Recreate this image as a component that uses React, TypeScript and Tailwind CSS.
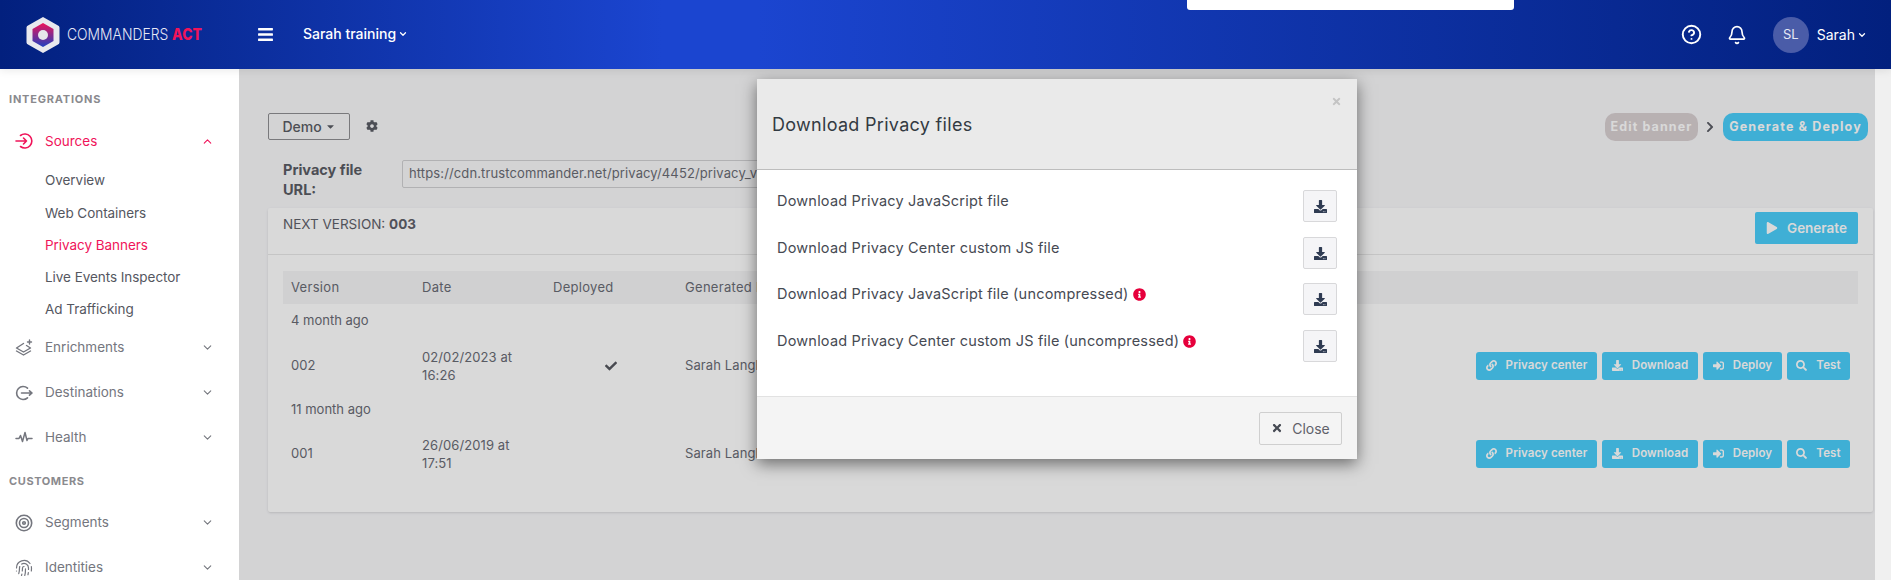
import React from "react";
import { ChevronDown, ChevronUp, CircleHelp, Bell, Fingerprint } from "lucide-react";
import { FaCog, FaCheck, FaDownload, FaLink, FaSearch, FaSignInAlt, FaPlay, FaTimes, FaInfoCircle, FaCaretDown, FaChevronRight, FaBars } from "react-icons/fa";

const font = { fontFamily: "Inter, 'Noto Sans', sans-serif" };

function Logo() {
  return (
    <svg width="36" height="38" viewBox="0 0 36 38">
      <defs>
        <linearGradient id="lg" x1="0" y1="0" x2="0" y2="1">
          <stop offset="0" stopColor="#ee1459" />
          <stop offset="1" stopColor="#1f3fc0" />
        </linearGradient>
      </defs>
      <path d="M18 1 33 9.500a2.500 2.500 0 0 1 1.500 2v15a2.500 2.500 0 0 1-1.500 2L18 37 3 28.500a2.500 2.500 0 0 1-1.500-2v-15a2.500 2.500 0 0 1 1.500-2Z" fill="#e9e9ee" />
      <path d="M18 7 28.500 13v12L18 31 7.500 25V13Z" fill="url(#lg)" />
      <circle cx="18" cy="19" r="5" fill="#e6e6ea" />
    </svg>
  );
}

const stroke = { fill: "none", stroke: "currentColor", strokeLinecap: "round" as const, strokeLinejoin: "round" as const };

function SourcesIcon() {
  return (
    <svg width="18" height="18" viewBox="0 0 18 18" {...stroke} strokeWidth="1.6">
      <path d="M5.500 3.500A7 7 0 1 1 5.500 14.500" />
      <path d="M1 9H11.500M8.500 6l3 3-3 3" />
    </svg>
  );
}

function EnrichIcon() {
  return (
    <svg width="18" height="18" viewBox="0 0 18 18" {...stroke} strokeWidth="1.4">
      <path d="M8.500 4.500 1.500 9l7 4 7-4-4-2.500" />
      <path d="M1.500 12l7 4 7-4" />
      <path d="M14.500 1v4M12.500 3h4" />
    </svg>
  );
}

function DestIcon() {
  return (
    <svg width="18" height="18" viewBox="0 0 18 18" {...stroke} strokeWidth="1.6">
      <path d="M12.500 4.200A6.500 6.500 0 1 0 12.500 13.800" />
      <path d="M6.500 9H17M14.500 6.800 17 9l-2.500 2.200" />
    </svg>
  );
}

function HealthIcon() {
  return (
    <svg width="18" height="18" viewBox="0 0 18 18" {...stroke} strokeWidth="1.5">
      <path d="M1 9.500h3l1.500-3 2 6 2.500-9 2 8 1-2h4" />
    </svg>
  );
}

function TargetIcon() {
  return (
    <svg width="18" height="18" viewBox="0 0 18 18" {...stroke} strokeWidth="1.6">
      <circle cx="9" cy="9" r="7.700" />
      <circle cx="9" cy="9" r="4.500" />
      <circle cx="9" cy="9" r="1.300" />
    </svg>
  );
}

function NavItem({ icon, label, active, open, h }: { icon: React.ReactNode; label: string; active?: boolean; open?: boolean; h: string }) {
  return (
    <div className={`flex items-center pl-[15px] pr-[25px] ${h} ${active ? "text-[#f0145a]" : "text-[#74767e]"}`}>
      <span className="w-[30px] flex items-center">{icon}</span>
      <span className="flex-1 text-[13.500px]">{label}</span>
      {open ? <ChevronUp size={13} strokeWidth={2} /> : <ChevronDown size={13} strokeWidth={2} />}
    </div>
  );
}

function SubItem({ label, active, h }: { label: string; active?: boolean; h: string }) {
  return <div className={`pl-[45px] flex items-center text-[13.500px] tracking-[-0.05px] ${h} ${active ? "text-[#f0145a]" : "text-[#55575f]"}`}>{label}</div>;
}

function Sidebar() {
  return (
    <aside className="w-[239px] shrink-0 bg-white pt-[21px]">
      <div className="pl-[9px] h-[18px] flex items-center text-[11px] font-bold tracking-[0.8px] text-[#8a8a8e]">INTEGRATIONS</div>
      <div className="mt-[14px]">
        <NavItem h="h-[38px]" active open label="Sources" icon={<SourcesIcon />} />
        <div className="pt-[4px]">
          <SubItem h="h-[33px]" label="Overview" />
          <SubItem h="h-[32px]" label="Web Containers" />
          <SubItem h="h-[32px]" active label="Privacy Banners" />
          <SubItem h="h-[33px]" label="Live Events Inspector" />
          <SubItem h="h-[31px]" label="Ad Trafficking" />
        </div>
        <NavItem h="h-[45px]" label="Enrichments" icon={<EnrichIcon />} />
        <NavItem h="h-[45px]" label="Destinations" icon={<DestIcon />} />
        <NavItem h="h-[45px]" label="Health" icon={<HealthIcon />} />
      </div>
      <div className="pl-[9px] h-[18px] mt-[12px] flex items-center text-[11px] font-bold tracking-[0.6px] text-[#8a8a8e]">CUSTOMERS</div>
      <div className="mt-[10px]">
        <NavItem h="h-[45px]" label="Segments" icon={<TargetIcon />} />
        <NavItem h="h-[45px]" label="Identities" icon={<Fingerprint size={18} strokeWidth={1.6} />} />
      </div>
    </aside>
  );
}

function ActionButton({ icon, label, w }: { icon: React.ReactNode; label: string; w: string }) {
  return (
    <button className={`${w} h-[28px] rounded-[3px] bg-[#4bcefb] text-white text-[11.500px] font-semibold flex items-center justify-center gap-[9px]`}>
      {icon}
      <span>{label}</span>
    </button>
  );
}

function Actions() {
  return (
    <div className="flex gap-[5px]">
      <ActionButton w="w-[121px]" label="Privacy center" icon={<FaLink size={11} />} />
      <ActionButton w="w-[96px]" label="Download" icon={<FaDownload size={11} />} />
      <ActionButton w="w-[79px]" label="Deploy" icon={<FaSignInAlt size={11} />} />
      <ActionButton w="w-[63px]" label="Test" icon={<FaSearch size={11} />} />
    </div>
  );
}

function Row({ v, date, time, check }: { v: string; date: string; time: string; check?: boolean }) {
  return (
    <div className="flex items-center h-[55px] pl-[8px] pr-[8px] text-[13px] tracking-[0.1px] text-[#696b75]">
      <span className="w-[131px]">{v}</span>
      <span className="w-[131px] leading-[18px]">{date}<br />{time}</span>
      <span className="w-[132px] pl-[52px]">{check && <FaCheck size={12} className="text-[#55575f]" />}</span>
      <span className="flex-1">Sarah Langlois</span>
      <Actions />
    </div>
  );
}

function MainArea() {
  return (
    <main className="flex-1 bg-[#f8f8fa] pl-[29px] pr-[2px] pt-[44px] relative">
      <div className="flex items-start">
        <button className="w-[82px] h-[27px] border border-[#8f8f92] rounded-[2px] flex items-center justify-center gap-[3px] text-[14px] font-medium text-[#5a5c64]">
          Demo <FaCaretDown size={11} />
        </button>
        <FaCog size={12} className="ml-[16px] mt-[7px] text-[#5a5c64]" />
        <div className="ml-auto mr-[5px] flex items-center">
          <span className="w-[93px] h-[28px] rounded-[10px] bg-[#d9d0d2] text-white text-[12.500px] font-bold tracking-[1.1px] flex items-center justify-center">Edit banner</span>
          <FaChevronRight size={12} className="ml-[6px] mr-[7px] text-[#5a5c64]" />
          <span className="w-[145px] h-[28px] rounded-[10px] bg-[#4bcefb] text-white text-[12.500px] font-bold tracking-[1.15px] flex items-center justify-center whitespace-nowrap">Generate &amp; Deploy</span>
        </div>
      </div>
      <div className="flex pl-[15px] pt-[19px] h-[67px]">
        <div className="w-[119px] text-[14.500px] leading-[20px] font-bold text-[#5a5c64]">Privacy file<br />URL:</div>
        <div className="w-[800px] h-[28px] border border-[#d0d0d3] rounded-[2px] bg-[#f8f8fa] pl-[6px] text-[13px] tracking-[0.12px] text-[#6a6c74] flex items-center">https://cdn.trustcommander.net/privacy/4452/privacy_v2_4452.js</div>
      </div>
      <section className="bg-white rounded-[2px] h-[304px] shadow-sm">
        <div className="h-[47px] border-b border-[#e8e8e8] flex justify-between pl-[15px] pr-[15px]">
          <div className="pt-[6px] text-[13.500px] text-[#5f616a]">NEXT VERSION: <b className="font-bold">003</b></div>
          <button className="mt-[4px] w-[103px] h-[32px] rounded-[2px] bg-[#4bcefb] text-white text-[13.500px] font-semibold flex items-center justify-center gap-[9px]">
            <FaPlay size={12} /> Generate
          </button>
        </div>
        <div className="px-[15px] pt-[16px]">
          <div className="flex items-center h-[33px] pl-[8px] bg-[#f5f5f6] text-[13px] tracking-[0.3px] text-[#696b75]">
            <span className="w-[131px]">Version</span>
            <span className="w-[131px]">Date</span>
            <span className="w-[132px]">Deployed</span>
            <span>Generated by</span>
          </div>
          <div className="h-[34px] flex items-center pl-[8px] text-[13px] text-[#696b75]">4 month ago</div>
          <Row v="002" date="02/02/2023 at" time="16:26" check />
          <div className="h-[33px] flex items-center pl-[8px] text-[13px] text-[#696b75]">11 month ago</div>
          <Row v="001" date="26/06/2019 at" time="17:51" />
        </div>
      </section>
      <div className="absolute inset-0 bg-black/15" />
    </main>
  );
}

function FileRow({ label, info, mt }: { label: string; info?: boolean; mt: string }) {
  return (
    <div className={`flex justify-between items-start ${mt}`}>
      <div className="flex items-center gap-[4px] h-[22px] text-[14.500px] tracking-[0.2px] text-[#464a53]">
        {label}
        {info && <FaInfoCircle size={13} className="text-[#e6003c]" />}
      </div>
      <button className="w-[34px] h-[32px] rounded-[2px] border border-[#d8d8da] bg-[#f5f5f7] flex items-center justify-center text-[#2f3b52]">
        <FaDownload size={13} />
      </button>
    </div>
  );
}

function Modal() {
  return (
    <div className="absolute left-[518px] top-[10px] w-[600px] h-[380px] bg-white shadow-[0_5px_15px_rgba(0,0,0,0.5)] flex flex-col">
      <div className="h-[91px] shrink-0 relative bg-[#eaeaea] border-b border-[#bdbdbd] flex items-center pl-[15px] text-[18px] tracking-[0.3px] text-[#333a42]">
        Download Privacy files
        <FaTimes size={11} className="absolute right-[15px] top-[17px] text-[#c4c4c4]" />
      </div>
      <div className="flex-1 pl-[20px] pr-[20px] pt-[20px]">
        <FileRow label="Download Privacy JavaScript file" mt="" />
        <FileRow label="Download Privacy Center custom JS file" mt="mt-[15px]" />
        <FileRow label="Download Privacy JavaScript file (uncompressed)" info mt="mt-[14px]" />
        <FileRow label="Download Privacy Center custom JS file (uncompressed)" info mt="mt-[15px]" />
      </div>
      <div className="h-[63px] shrink-0 bg-[#f4f4f4] border-t border-[#e2e2e2] flex items-center justify-end pr-[15px]">
        <button className="w-[83px] h-[33px] rounded-[2px] border border-[#cfcfcf] flex items-center justify-center gap-[9px] text-[14px] text-[#5f616a]">
          <FaTimes size={12} className="text-[#464a53]" /> Close
        </button>
      </div>
    </div>
  );
}

export default function App() {
  return (
    <div className="h-[580px] overflow-hidden flex flex-col bg-[#f0f0f0] relative" style={font}>
      <header className="h-[69px] shrink-0 relative z-10 flex items-center text-white bg-[linear-gradient(90deg,#02207e_0%,#1b45d0_35%,#1b45d0_40%,#02207e_100%)] shadow-[0_2px_8px_rgba(0,0,0,0.08)]">
        <div className="w-[257px] flex items-center pl-[25px]">
          <Logo />
          <span className="ml-[6px] inline-block origin-left scale-x-[0.84] whitespace-nowrap text-[16.500px] font-light text-[#e6e8f5]">COMMANDERS <b className="font-extrabold text-[#f0145a]">ACT</b></span>
        </div>
        <FaBars size={17} />
        <div className="ml-[29px] mb-[2px] flex items-center gap-[2px] text-[14px] font-medium">Sarah training <ChevronDown size={10} strokeWidth={3} /></div>
        <div className="ml-auto flex items-center pr-[24px]">
          <CircleHelp size={21} strokeWidth={2.2} />
          <Bell size={20} strokeWidth={2} className="ml-[25px]" />
          <span className="ml-[26px] w-[36px] h-[36px] rounded-full bg-[#4a5ca8] flex items-center justify-center text-[13px] text-[#e6e8f5]">SL</span>
          <span className="ml-[8px] text-[14px]">Sarah</span>
          <ChevronDown size={10} strokeWidth={3} className="ml-[2px]" />
        </div>
        <div className="absolute left-[1187px] top-0 w-[327px] h-[10px] bg-white rounded-b-[3px]" />
      </header>
      <div className="flex-1 flex min-h-0">
        <Sidebar />
        <div className="flex-1 flex relative">
          <MainArea />
          <div className="w-[16px] shrink-0 bg-[#f0f0f0]" />
          <Modal />
        </div>
      </div>
    </div>
  );
}
